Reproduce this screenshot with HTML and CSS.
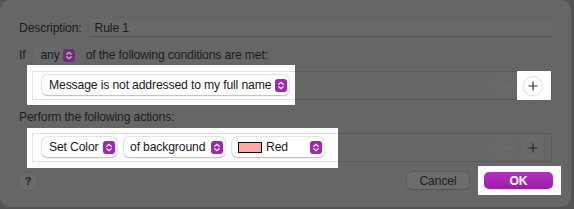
FILE: index.html
```html
<!DOCTYPE html>
<html>
<head>
<meta charset="utf-8">
<link rel="stylesheet" href="styles.css">
</head>
<body>
<div class="sheet">
  <div class="row desc">
    <span class="label">Description:</span>
    <div class="field">Rule 1</div>
  </div>
  <div class="row cond">
    <span>If</span>
    <span class="mini-pop">any <svg class="stp dim" viewBox="0 0 12 13" width="12" height="13"><rect width="12" height="13" rx="3" fill="currentColor"/><path d="M3.8 5.3 6 3.3 8.2 5.3M3.8 7.7 6 9.7 8.2 7.7" fill="none" stroke="#bdbdbd" stroke-width="1.2" stroke-linecap="round" stroke-linejoin="round"/></svg></span>
    <span>of the following conditions are met:</span>
  </div>
  <div class="list">
    <div class="spot spot-rule">
      <div class="inner">
        <div class="popup pop-msg"><span>Message is not addressed to my full name</span><svg class="stp" viewBox="0 0 12 13" width="12" height="13"><rect width="12" height="13" rx="3" fill="currentColor"/><path d="M3.8 5.3 6 3.3 8.2 5.3M3.8 7.7 6 9.7 8.2 7.7" fill="none" stroke="#fff" stroke-width="1.2" stroke-linecap="round" stroke-linejoin="round"/></svg></div>
      </div>
    </div>
    <div class="spacer"></div>
    <div class="round dimround off"><svg width="10" height="10" viewBox="0 0 10 10"><path d="M0.5 5H9.5" stroke="currentColor" stroke-width="1.2"/></svg></div>
    <div class="spot spot-plus">
      <div class="round lit"><svg width="10" height="10" viewBox="0 0 10 10"><path d="M5 0.5V9.5M0.5 5H9.5" stroke="currentColor" stroke-width="1.2"/></svg></div>
    </div>
  </div>
  <div class="row perform">Perform the following actions:</div>
  <div class="list list2">
    <div class="spot spot-act">
      <div class="inner inner-act">
        <div class="popup pop-set"><span>Set Color</span><svg class="stp" viewBox="0 0 12 13" width="12" height="13"><rect width="12" height="13" rx="3" fill="currentColor"/><path d="M3.8 5.3 6 3.3 8.2 5.3M3.8 7.7 6 9.7 8.2 7.7" fill="none" stroke="#fff" stroke-width="1.2" stroke-linecap="round" stroke-linejoin="round"/></svg></div>
        <div class="popup pop-bg"><span>of background</span><svg class="stp" viewBox="0 0 12 13" width="12" height="13"><rect width="12" height="13" rx="3" fill="currentColor"/><path d="M3.8 5.3 6 3.3 8.2 5.3M3.8 7.7 6 9.7 8.2 7.7" fill="none" stroke="#fff" stroke-width="1.2" stroke-linecap="round" stroke-linejoin="round"/></svg></div>
        <div class="popup pop-color"><span class="swatch"></span><span class="red">Red</span><svg class="stp push" viewBox="0 0 12 13" width="12" height="13"><rect width="12" height="13" rx="3" fill="currentColor"/><path d="M3.8 5.3 6 3.3 8.2 5.3M3.8 7.7 6 9.7 8.2 7.7" fill="none" stroke="#fff" stroke-width="1.2" stroke-linecap="round" stroke-linejoin="round"/></svg></div>
      </div>
    </div>
    <div class="spacer"></div>
    <div class="round dimround off"><svg width="10" height="10" viewBox="0 0 10 10"><path d="M0.5 5H9.5" stroke="currentColor" stroke-width="1.2"/></svg></div>
    <div class="round dimround on"><svg width="10" height="10" viewBox="0 0 10 10"><path d="M5 0.5V9.5M0.5 5H9.5" stroke="currentColor" stroke-width="1.2"/></svg></div>
  </div>
  <div class="footer">
    <div class="help">?</div>
    <div class="cancel">Cancel</div>
    <div class="spot spot-ok"><div class="ok">OK</div></div>
  </div>
</div>
</body>
</html>
```
FILE: styles.css
```css
html, body {
  margin: 0;
  padding: 0;
}
body {
  background: #545454;
  font-family: "Liberation Sans", Arial, sans-serif;
  font-size: 12.2px;
  letter-spacing: -0.15px;
  color: #1c1c1c;
  width: 574px;
  height: 209px;
  overflow: hidden;
}
.sheet {
  width: 571px;
  height: 207px;
  box-sizing: border-box;
  background: #666666;
  border-radius: 10px;
  padding: 19px 19px 0 19px;
  display: flex;
  flex-direction: column;
}
.row {
  display: flex;
  align-items: center;
}
.desc {
  height: 18px;
}
.field {
  flex: 1;
  margin-left: 8px;
  height: 18px;
  box-sizing: border-box;
  border-bottom: 1px solid #525252;
  padding-left: 5px;
  display: flex;
  align-items: center;
  background: #686868;
}
.cond {
  height: 16px;
  margin-top: 10px;
}
.mini-pop {
  display: flex;
  align-items: center;
  gap: 3px;
  height: 16px;
  padding: 0 2px 0 6px;
  margin: 0 9px;
  background: #696969;
  border-radius: 4px;
}
.stp {
  display: block;
  flex: none;
  color: #a624b4;
}
.stp.dim {
  color: #6f2f79;
}
.list {
  margin: 8px 0 0 13px;
  height: 29px;
  box-sizing: border-box;
  border: 1px solid #5a5a5a;
  background: #676767;
  display: flex;
  align-items: flex-start;
}
.list2 {
  margin-top: 9px;
}
.spacer {
  flex: 1;
}
.spot {
  background: #ffffff;
  box-sizing: border-box;
  flex: none;
}
.spot-rule {
  margin: -7px 0 0 -6px;
  height: 40px;
  padding: 6px 0 0 5px;
}
.spot-act {
  margin: -6px 0 0 -6px;
  height: 40px;
  padding: 5px 0 0 5px;
}
.inner {
  height: 29px;
  box-sizing: border-box;
  border: 1px solid #e2e2e2;
  border-right: 0;
  padding: 3px 6px 0 9px;
  display: flex;
  align-items: flex-start;
  gap: 7px;
}
.inner-act {
  padding-right: 14px;
}
.popup {
  height: 20px;
  box-sizing: border-box;
  background: #ffffff;
  border-radius: 5px;
  box-shadow: 0 0 0 0.5px rgba(0, 0, 0, 0.14), 0 0.5px 1.5px rgba(0, 0, 0, 0.22);
  display: flex;
  align-items: center;
  justify-content: space-between;
  padding: 0 2px 0 7px;
  color: #1a1a1a;
  white-space: nowrap;
}
.pop-msg { width: 247px; }
.pop-set { width: 75px; }
.pop-bg { width: 101px; padding-left: 6px; }
.pop-color {
  width: 92px;
  justify-content: flex-start;
  padding-left: 6px;
}
.swatch {
  width: 24px;
  height: 11px;
  box-sizing: border-box;
  border: 1px solid #111;
  background: #ffa9a2;
  flex: none;
}
.red {
  margin-left: 4px;
}
.push {
  margin-left: auto;
}
.round {
  width: 20px;
  height: 20px;
  box-sizing: border-box;
  border-radius: 50%;
  display: flex;
  align-items: center;
  justify-content: center;
  flex: none;
}
.round svg {
  display: block;
}
.dimround {
  margin-top: 4px;
  border: 1px solid #6d6d6d;
  background: #686868;
}
.dimround.off {
  color: #717171;
  margin-right: 8px;
}
.dimround.on {
  color: #262626;
  margin-right: 8px;
}
.list .off + .spot-plus {
  margin-left: -6px;
}
.spot-plus {
  width: 34px;
  height: 29px;
  margin-top: -1px;
  display: flex;
  align-items: center;
  padding-left: 6px;
}
.lit {
  border: 1px solid #e3e3e3;
  background: #fff;
  color: #333;
  box-shadow: 0 0.5px 1px rgba(0, 0, 0, 0.08);
}
.perform {
  height: 14px;
  margin-top: 10px;
}
.footer {
  margin-top: 4px;
  height: 29px;
  display: flex;
  align-items: center;
}
.help {
  width: 20px;
  height: 20px;
  margin-left: -1px;
  box-sizing: border-box;
  border-radius: 50%;
  background: #6a6a6a;
  border: 1px solid #616161;
  display: flex;
  align-items: center;
  justify-content: center;
  font-weight: bold;
  font-size: 11px;
  color: #222;
}
.cancel {
  margin-left: auto;
  width: 62px;
  height: 17px;
  box-sizing: border-box;
  border-radius: 5px;
  background: #6c6c6c;
  box-shadow: 0 0 0 0.5px #5a5a5a, 0 0.5px 1px rgba(0, 0, 0, 0.2);
  display: flex;
  align-items: center;
  justify-content: center;
  color: #1e1e1e;
  margin-right: 9px;
}
.spot-ok {
  width: 83px;
  height: 29px;
  padding: 0 8px 0 6px;
  margin-right: -9px;
  display: flex;
  align-items: center;
}
.ok {
  width: 69px;
  height: 17px;
  border-radius: 5px;
  background: linear-gradient(#b431bd, #9d1ca7);
  color: #fff;
  font-weight: bold;
  display: flex;
  align-items: center;
  justify-content: center;
}
```
